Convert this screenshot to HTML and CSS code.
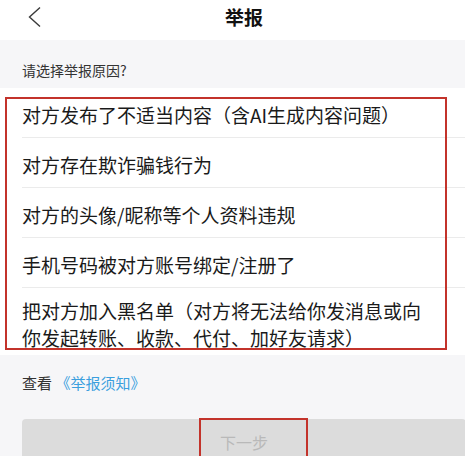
FILE: index.html
```html
<!DOCTYPE html>
<html lang="zh-CN">
<head>
  <meta charset="UTF-8">
  <meta name="viewport" content="width=device-width, initial-scale=1.0">
  <title>举报</title>
  <link rel="stylesheet" href="styles.css">
</head>
<body>
  <div class="page">
    <div class="header">
      <div class="back">
        <svg width="14" height="22" viewBox="0 0 14 22">
          <polyline points="12,1.5 1.5,11 12,20.5" fill="none" stroke="#3a3a3a" stroke-width="1.4"/>
        </svg>
      </div>
      <h1 class="title">举报</h1>
    </div>

    <div class="prompt">请选择举报原因?</div>

    <div class="reasons">
      <div class="reason"><span>对方发布了不适当内容（含AI生成内容问题）</span></div>
      <div class="reason"><span>对方存在欺诈骗钱行为</span></div>
      <div class="reason"><span>对方的头像/昵称等个人资料违规</span></div>
      <div class="reason"><span>手机号码被对方账号绑定/注册了</span></div>
      <div class="reason last"><span>把对方加入黑名单（对方将无法给你发消息或向你发起转账、收款、代付、加好友请求）</span></div>
      <div class="mark mark-list"></div>
    </div>

    <div class="notice">查看 <a class="notice-link" href="#">《举报须知》</a></div>

    <div class="footer">
      <button class="next" disabled>下一步</button>
      <div class="mark mark-button"></div>
    </div>
  </div>
</body>
</html>
```

FILE: styles.css
```css
html, body {
  margin: 0;
  padding: 0;
  overflow: hidden;
}

body {
  font-family: "Noto Sans CJK SC", "Noto Sans", sans-serif;
  background: #f6f6f8;
  color: #1a1a1a;
}

.page {
  width: 488px;
  height: 456px;
  position: relative;
  overflow: hidden;
  background: #f6f6f8;
}

.header {
  height: 40px;
  background: #fff;
  display: flex;
  align-items: center;
  justify-content: center;
  position: relative;
}

.back {
  position: absolute;
  left: 28px;
  top: 6px;
  height: 22px;
}

.title {
  margin: 0;
  font-size: 19px;
  font-weight: 700;
  line-height: 22px;
  margin-top: -6px;
  color: #111;
}

.prompt {
  padding: 20px 22px 8px;
  font-size: 14px;
  line-height: 20px;
  color: #333;
}

.reasons {
  background: #fff;
  position: relative;
}

.reason {
  padding-left: 22px;
}

.reason span {
  display: block;
  padding: 13px 60px 9px 0;
  font-size: 19px;
  line-height: 27px;
  border-bottom: 1px solid #ebebeb;
}

.reason.last span {
  padding: 9px 60px 4px 0;
  border-bottom: none;
}

.mark {
  position: absolute;
  border: 2px solid #c3332b;
  pointer-events: none;
}

.mark-list {
  left: 5px;
  top: 9px;
  width: 438px;
  height: 249px;
}

.notice {
  padding: 18px 22px 0;
  height: 46px;
  font-size: 15px;
  line-height: 20px;
  color: #333;
}

.notice-link {
  color: #3a9fde;
  text-decoration: none;
}

.footer {
  position: relative;
  padding: 0 22px;
}

.next {
  display: block;
  width: 100%;
  height: 46px;
  border: none;
  border-radius: 4px;
  background: #dcdcdc;
  color: #b9b9b9;
  font-family: inherit;
  font-size: 16px;
}

.mark-button {
  left: 199px;
  top: -1px;
  width: 105px;
  height: 60px;
}
```
